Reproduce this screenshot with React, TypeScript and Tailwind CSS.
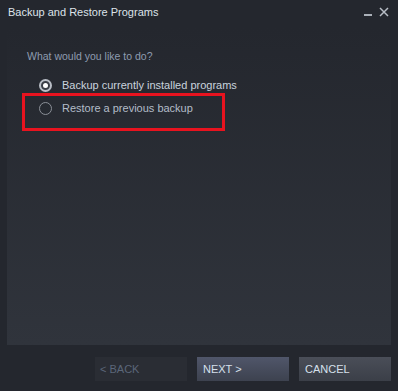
import React from "react";

function Radio({ checked }: { checked?: boolean }) {
  return (
    <span
      className={
        checked
          ? "flex h-[13px] w-[13px] items-center justify-center rounded-full border-2 border-[#b9bec6] bg-[#3a3e46]"
          : "flex h-[13px] w-[13px] items-center justify-center rounded-full border-[1.5px] border-[#8b9098] bg-[#262a31]"
      }
    >
      {checked && <span className="h-[5px] w-[5px] rounded-full bg-white" />}
    </span>
  );
}

export default function App() {
  return (
    <div
      className="flex h-[391px] w-[398px] flex-col bg-[#24272e] text-[11px]"
      style={{ fontFamily: '"Liberation Sans", Arial, sans-serif' }}
    >
      <div className="flex h-[28px] items-center justify-between pl-2 pr-[9px] text-[#dde3ea]">
        <span className="pb-[4px]">Backup and Restore Programs</span>
        <div className="flex items-center gap-[7px] pb-[4px] text-[#aab0b8]">
          <span className="mt-[6px] h-[1.5px] w-[8px] bg-[#aab0b8]" />
          <svg width="10" height="10" viewBox="0 0 10 10" aria-hidden="true">
            <path d="M1 1L9 9M9 1L1 9" stroke="#b8bec6" strokeWidth="1.5" />
          </svg>
        </div>
      </div>

      <div className="relative mx-[7px] h-[317px] bg-gradient-to-b from-[#24272e] to-[#30343c] pl-5 pt-[21px]">
        <p className="text-[10.5px] leading-[14px] text-[#8e9cb0]">What would you like to do?</p>
        <div className="mt-[15px] flex flex-col gap-[9px] pl-[12px]">
          <label className="flex h-[14px] items-center gap-[10px] text-[#c9d3de]">
            <Radio checked />
            <span>Backup currently installed programs</span>
          </label>
          <label className="flex h-[14px] items-center gap-[10px] text-[#b3bcc8]">
            <Radio />
            <span>Restore a previous backup</span>
          </label>
        </div>
        <div className="absolute left-[15px] top-[65px] h-[38px] w-[203px] border-[3px] border-[#e8131f]" />
      </div>

      <div className="flex justify-end gap-[10px] pr-[7px] pt-[12px]">
        <button className="flex h-[24px] w-[92px] items-center bg-[#2a2d34] pl-[5px] text-[#5b6679]">
          &lt; BACK
        </button>
        <button className="flex h-[24px] w-[92px] items-center bg-gradient-to-b from-[#50566a] to-[#3d424f] pl-[6px] text-[#d6e0ec]">
          NEXT &gt;
        </button>
        <button className="flex h-[24px] w-[92px] items-center bg-gradient-to-b from-[#4a4e58] to-[#3b3f48] pl-[6px] text-[#d6e0ec]">
          CANCEL
        </button>
      </div>
    </div>
  );
}
